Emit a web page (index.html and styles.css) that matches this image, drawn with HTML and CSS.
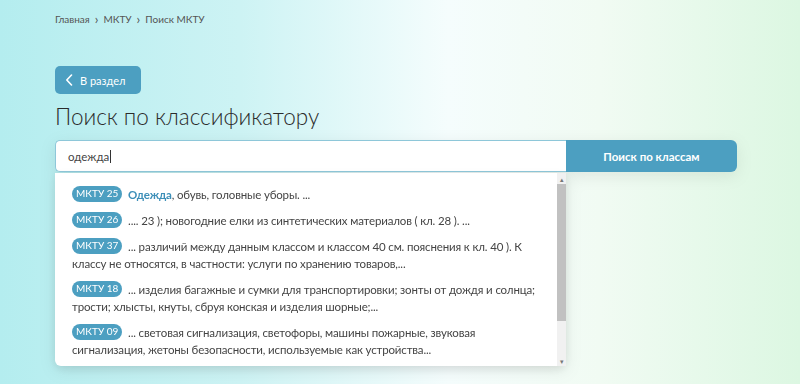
FILE: index.html
```html
<!DOCTYPE html>
<html lang="ru">
<head>
  <meta charset="UTF-8" />
  <meta name="viewport" content="width=device-width, initial-scale=1.0"/>
  <title>Поиск МКТУ</title>
  <link rel="stylesheet" href="styles.css">
</head>
<body>
  <div class="page">
    <nav class="crumbs">
      <a href="#">Главная</a><span class="sep">›</span><a href="#">МКТУ</a><span class="sep">›</span><span>Поиск МКТУ</span>
    </nav>

    <a class="back" href="#">
      <svg width="8" height="12" viewBox="0 0 8 12"><path d="M6.5 1 L1.8 6 L6.5 11" fill="none" stroke="#fff" stroke-width="1.6" stroke-linecap="round" stroke-linejoin="round"/></svg>
      В раздел
    </a>

    <h1>Поиск по классификатору</h1>

    <div class="search">
      <div class="field">
        <div class="input">одежда<span class="caret"></span></div>
        <div class="dropdown">
          <div class="list">
            <div class="item"><span class="badge">МКТУ 25</span> <b>Одежда</b>, обувь, головные уборы. ...</div>
            <div class="item"><span class="badge">МКТУ 26</span> .... 23 ); новогодние елки из синтетических материалов ( кл. 28 ). ...</div>
            <div class="item"><span class="badge">МКТУ 37</span> ... различий между данным классом и классом 40 см. пояснения к кл. 40 ). К классу не относятся, в частности: услуги по хранению товаров,...</div>
            <div class="item"><span class="badge">МКТУ 18</span> ... изделия багажные и сумки для транспортировки; зонты от дождя и солнца; трости; хлысты, кнуты, сбруя конская и изделия шорные;...</div>
            <div class="item"><span class="badge">МКТУ 09</span> ... световая сигнализация, светофоры, машины пожарные, звуковая сигнализация, жетоны безопасности, используемые как устройства...</div>
          </div>
          <div class="scrollbar">
            <span class="arrow">▴</span>
            <span class="thumb"></span>
            <span class="track"></span>
            <span class="arrow">▾</span>
          </div>
        </div>
      </div>
      <button class="go">Поиск по классам</button>
    </div>
  </div>
</body>
</html>
```

FILE: styles.css
```css
* { box-sizing: border-box; margin: 0; padding: 0; }

body {
  font-family: 'Lato', 'Open Sans', sans-serif;
  background: linear-gradient(90deg, #b4edef 0%, #cdf3f4 30%, #f5fdfd 56%, #f1fbf3 75%, #dcf7e2 100%);
  height: 384px;
  overflow: hidden;
  color: #333;
}

.page {
  width: 682px;
  margin-left: 55px;
  padding-top: 12px;
}

.crumbs {
  font-size: 10px;
  color: #555;
  display: flex;
  align-items: center;
  height: 13px;
}

.crumbs a { color: #555; text-decoration: none; }

.sep {
  margin: 0 5px;
  font-size: 13px;
  line-height: 10px;
}

.back {
  margin-top: 41px;
  width: 86px;
  height: 28px;
  background: #4c9fc1;
  border-radius: 5px;
  display: flex;
  align-items: center;
  gap: 7px;
  padding-left: 10px;
  color: #fff;
  font-size: 11px;
  text-decoration: none;
}

h1 {
  font-weight: 300;
  font-size: 22.5px;
  color: #2b2b2b;
  margin-top: 7px;
  height: 32px;
  line-height: 32px;
}

.search {
  margin-top: 7px;
  display: flex;
  align-items: flex-start;
  filter: drop-shadow(0 4px 8px rgba(0,0,0,0.08));
}

.field { width: 511px; }

.input {
  height: 32px;
  background: #fff;
  border: 1px solid #8ec7d9;
  border-right: none;
  border-radius: 5px 0 0 5px;
  padding-left: 12px;
  font-size: 11.5px;
  color: #444;
  display: flex;
  align-items: center;
}

.caret {
  width: 1px;
  height: 13px;
  background: #333;
  margin-left: 1px;
}

.dropdown {
  margin-top: 1px;
  height: 193px;
  background: #fff;
  border-radius: 0 0 6px 6px;
  display: flex;
  box-shadow: 0 3px 10px rgba(0,0,0,0.08);
}

.list {
  flex: 1;
  overflow: hidden;
  padding: 13px 8px 0 17px;
  font-size: 11.5px;
  letter-spacing: -0.15px;
  color: #444;
  line-height: 17px;
}

.item { margin-bottom: 9px; }

.item b { color: #3d8fb8; font-weight: 700; }

.badge {
  display: inline-block;
  vertical-align: top;
  background: #4c9fc1;
  color: #fff;
  border-radius: 8px;
  padding: 0 4px;
  height: 16px;
  line-height: 15px;
  margin-right: 3px;
  font-size: 10px;
  letter-spacing: 0;
}

.scrollbar {
  width: 9px;
  display: flex;
  flex-direction: column;
  background: #f1f1f1;
  padding-top: 2px;
}

.arrow {
  height: 9px;
  font-size: 7px;
  line-height: 9px;
  text-align: center;
  color: #777;
}

.thumb {
  height: 137px;
  background: #c1c1c1;
}

.track { flex: 1; }

.go {
  width: 171px;
  height: 32px;
  border: none;
  background: #4c9fc1;
  color: #fff;
  font-family: inherit;
  font-weight: 700;
  font-size: 11.5px;
  border-radius: 0 6px 6px 0;
}
```
